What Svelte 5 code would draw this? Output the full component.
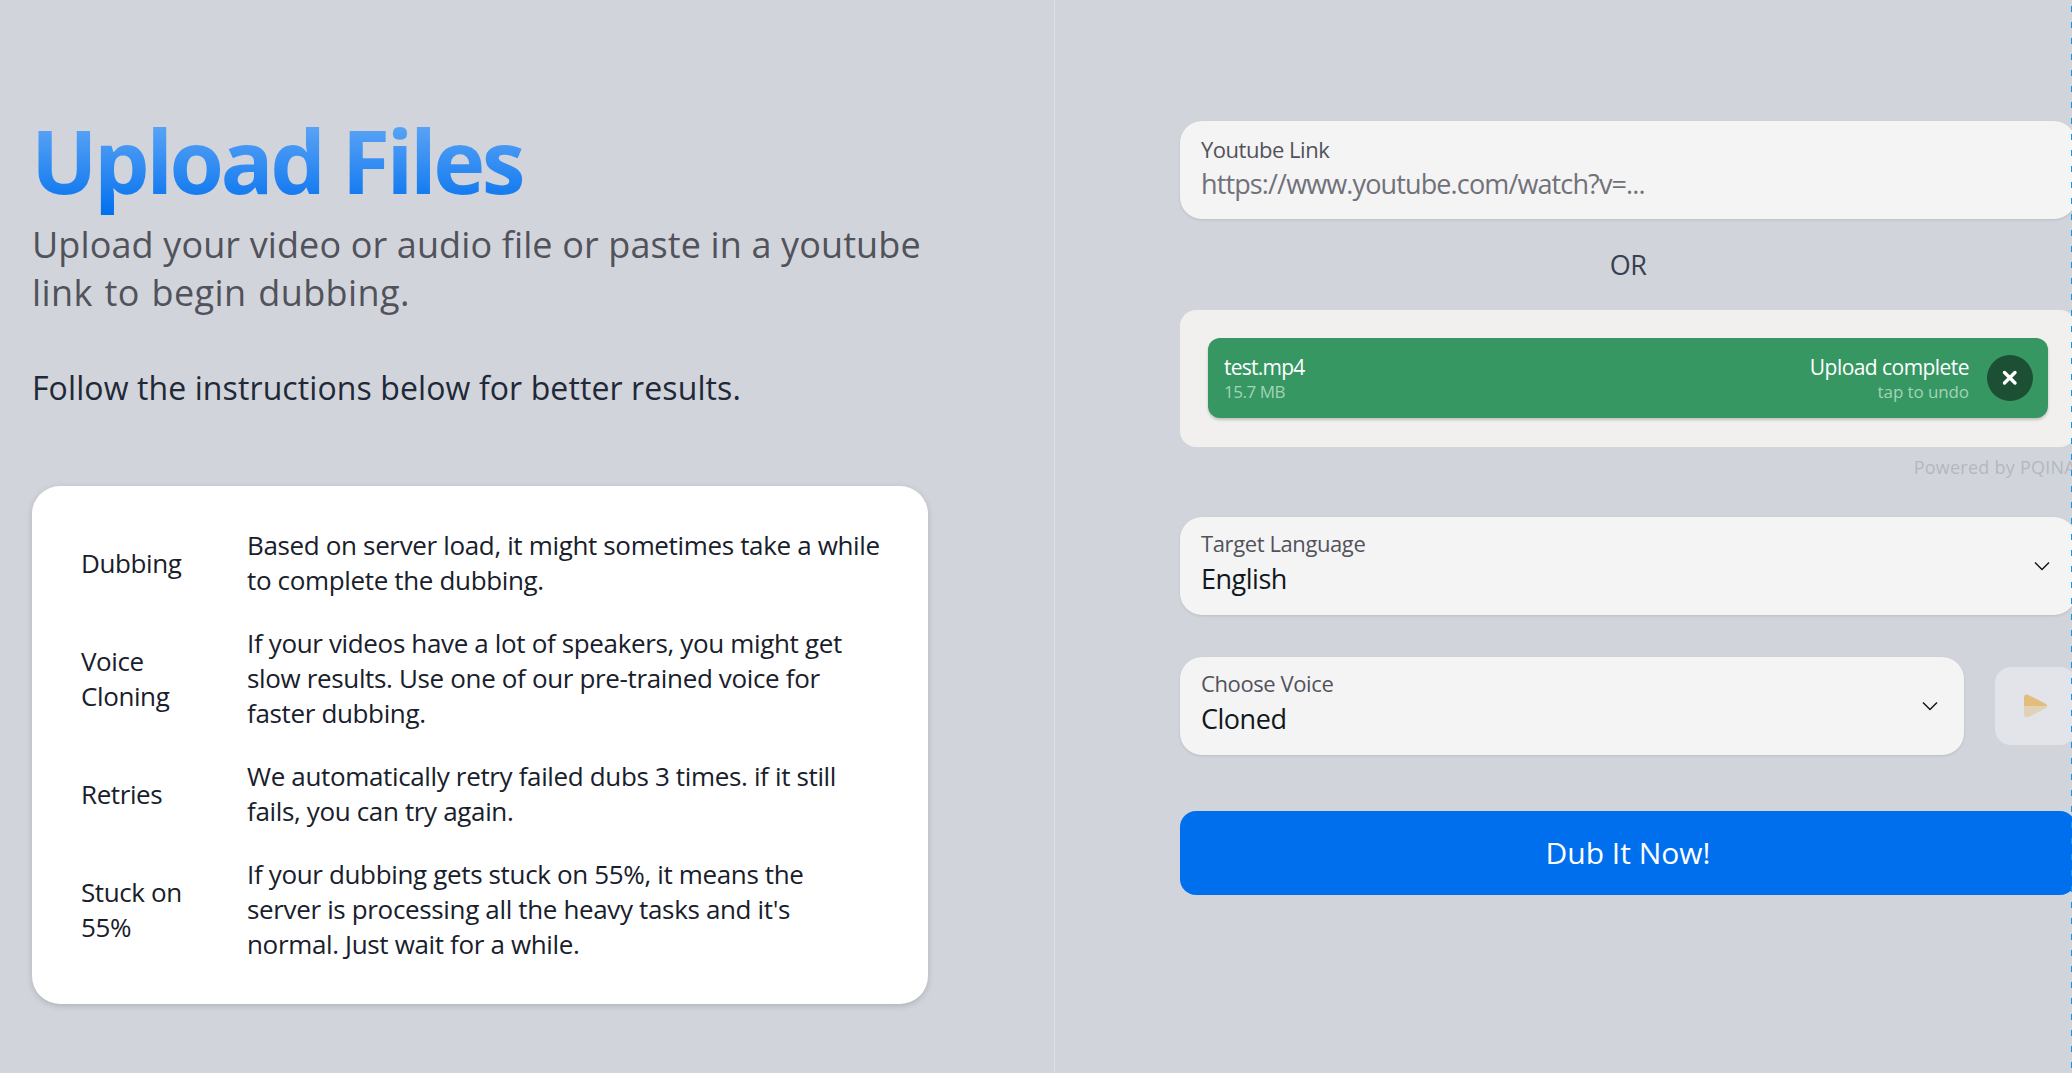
<script>
  const notes = [
    { label: 'Dubbing', lines: ['Based on server load, it might sometimes take a while', 'to complete the dubbing.'] },
    { label: 'Voice Cloning', lines: ['If your videos have a lot of speakers, you might get', 'slow results. Use one of our pre-trained voice for', 'faster dubbing.'] },
    { label: 'Retries', lines: ['We automatically retry failed dubs 3 times. if it still', 'fails, you can try again.'] },
    { label: 'Stuck on 55%', lines: ['If your dubbing gets stuck on 55%, it means the', "server is processing all the heavy tasks and it's", 'normal. Just wait for a while.'] }
  ];
</script>

<div class="page">
  <section class="left">
    <h1>Upload Files</h1>
    <p class="sub"><span>Upload your video or audio file or paste in a youtube</span><span>link to begin dubbing.</span></p>
    <p class="follow">Follow the instructions below for better results.</p>
    <div class="card">
      {#each notes as n}
        <div class="k">{n.label}</div>
        <div class="v">
          {#each n.lines as line}<span>{line}</span>{/each}
        </div>
      {/each}
    </div>
  </section>

  <section class="right">
    <div class="stack">
      <div class="field link">
        <span class="lab">Youtube Link</span>
        <span class="ph">https://www.youtube.com/watch?v=...</span>
      </div>
      <div class="or">OR</div>
      <div class="pond">
        <div class="item">
          <div class="info">
            <span class="a">test.mp4</span>
            <span class="b">15.7 MB</span>
          </div>
          <div class="status">
            <span class="a">Upload complete</span>
            <span class="b">tap to undo</span>
          </div>
          <div class="undo">
            <svg viewBox="0 0 26 26" width="26" height="26"><path d="M7.500 7.500l10.500 10.500M18 7.500L7.500 18" stroke="#fff" stroke-width="3.400" stroke-linecap="round" fill="none"/></svg>
          </div>
        </div>
      </div>
      <div class="credit">Powered by PQINA</div>

      <div class="field sel">
        <div><span class="lab">Target Language</span><span class="val">English</span></div>
        <svg class="chev" viewBox="0 0 16 16" width="16" height="16"><path d="M1 4.500l7 7 7-7" stroke="#11181c" stroke-width="1.500" fill="none"/></svg>
      </div>

      <div class="row">
        <div class="field sel grow">
          <div><span class="lab">Choose Voice</span><span class="val">Cloned</span></div>
          <svg class="chev" viewBox="0 0 16 16" width="16" height="16"><path d="M1 4.500l7 7 7-7" stroke="#11181c" stroke-width="1.500" fill="none"/></svg>
        </div>
        <button class="play" aria-label="Play">
          <svg viewBox="0 0 23 24" width="23" height="24">
            <path d="M0 12V3.500C0 1 2 -.2 4.200 .9L21 9.400C22.500 10.200 23 11 23 12Z" fill="#e3bd7d"/>
            <path d="M0 12H23C23 13 22.500 13.800 21 14.600L4.200 23.100C2 24.200 0 23 0 20.500Z" fill="#e2d2b4"/>
          </svg>
        </button>
      </div>

      <button class="dub">Dub It Now!</button>
    </div>
  </section>
  <div class="dash"></div>
</div>

<style>
  :global(body) { margin: 0; background: #d1d5db; overflow: hidden; }
  .page {
    display: flex;
    height: 1073px;
    width: 2072px;
    overflow: hidden;
    position: relative;
    font-family: "Open Sans", "Noto Sans", sans-serif;
    background: #d1d5db;
    letter-spacing: -0.48px;
  }
  .left {
    width: 1055px;
    box-sizing: border-box;
    flex: none;
    padding: 104px 32px 0;
    border-right: 1px solid #dde0e5;
  }
  h1 {
    margin: 0 0 5px -1px;
    font-size: 88px;
    line-height: 112px;
    font-weight: 700;
    letter-spacing: -3.5px;
    background: linear-gradient(#6fb0f7, #006fee);
    -webkit-background-clip: text;
    background-clip: text;
    color: transparent;
  }
  .sub { margin: 0; font-size: 36px; line-height: 48px; color: #52525b; letter-spacing: 0.12px; }
  .sub span { display: block; white-space: nowrap; }
  .sub span + span { letter-spacing: 0.4px; word-spacing: 2px; }
  .follow { margin: 47px 0 0; font-size: 32px; line-height: 48px; color: #1f2937; letter-spacing: 0.1px; }
  .card {
    margin-top: 74px;
    width: 896px;
    height: 518px;
    box-sizing: border-box;
    background: #fff;
    border-radius: 28px;
    box-shadow: 0 2px 6px rgba(0,0,0,.16);
    padding: 42px 48px 44px 49px;
    display: grid;
    grid-template-columns: 166px 1fr;
    row-gap: 28px;
    align-items: center;
    font-size: 26px;
    line-height: 35px;
    color: #18202b;
    letter-spacing: -0.35px;
  }
  .k { padding-right: 44px; letter-spacing: -0.4px; }
  .v span { display: block; white-space: nowrap; }
  .right { flex: none; width: 1017px; padding: 121px 0 0 125px; box-sizing: border-box; }
  .stack { width: 896px; }
  .field {
    height: 98px;
    box-sizing: border-box;
    background: #f4f4f5;
    border-radius: 22px;
    padding: 14px 21px;
    box-shadow: 0 1px 3px rgba(0,0,0,.1);
  }
  .lab { display: block; font-size: 22px; line-height: 28px; color: #52525b; }
  .ph { display: block; font-size: 27px; line-height: 38px; margin-top: 2px; color: #71717a; letter-spacing: -0.87px; }
  .val { display: block; font-size: 27px; line-height: 38px; margin-top: 3px; color: #11181c; }
  .or { height: 91px; line-height: 91px; text-align: center; font-size: 27px; color: #374151; }
  .pond { height: 137px; box-sizing: border-box; background: #f1f0ef; border-radius: 16px; padding: 28px; }
  .item {
    height: 80px;
    width: 840px;
    box-sizing: border-box;
    background: #369763;
    border-radius: 12px;
    box-shadow: 0 2px 3px rgba(0,0,0,.2);
    display: flex;
    align-items: center;
    padding: 0 15px 0 16px;
    color: #fff;
  }
  .info { flex: 1; }
  .a { display: block; font-size: 21px; line-height: 28px; }
  .info .a { letter-spacing: -0.75px; }
  .b { display: block; font-size: 17px; line-height: 22px; color: #a3d3b8; }
  .status .a { letter-spacing: -0.55px; }
  .status .b { letter-spacing: -0.1px; }
  .status { text-align: right; margin-right: 18px; }
  .undo { width: 46px; height: 46px; border-radius: 50%; background: #1c4f33; display: flex; align-items: center; justify-content: center; }
  .credit { height: 70px; padding-top: 7px; box-sizing: border-box; line-height: 26px; font-size: 18px; letter-spacing: 0.25px; color: #b4b8be; text-align: right; white-space: nowrap; }
  .sel { display: flex; align-items: flex-start; justify-content: space-between; padding-top: 12px; padding-bottom: 12px; }
  .sel .lab { letter-spacing: -0.4px; }
  .row { display: flex; align-items: center; gap: 31px; margin-top: 42px; }
  .grow { flex: none; width: 784px; }
  .chev { align-self: center; margin-right: 5px; }
  .play {
    flex: none;
    width: 81px;
    height: 78px;
    border: 0;
    border-radius: 16px;
    background: #e2e4e9;
    padding: 0 0 0 29px;
    display: flex;
    align-items: center;
  }
  .dub {
    display: block;
    width: 100%;
    height: 84px;
    margin-top: 56px;
    padding: 0 0 2px;
    border: 0;
    border-radius: 16px;
    background: #006fee;
    color: #fff;
    font: 500 30px "Open Sans", sans-serif;
    letter-spacing: 0;
  }
  .dash {
    position: absolute;
    top: 0;
    right: 0;
    bottom: 0;
    width: 1px;
    background: repeating-linear-gradient(transparent 0 6px, #1a94de 6px 12px, transparent 12px 16px);
  }
</style>
